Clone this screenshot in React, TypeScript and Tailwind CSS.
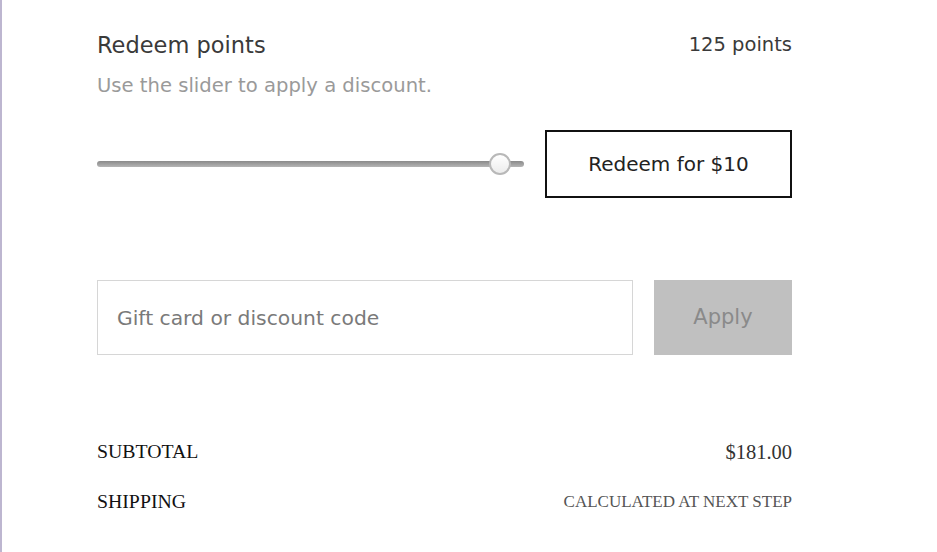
const App = () => {
  return (
    <div className="h-[552px] w-[937px] bg-white border-l-2 border-[#bdb6d0]">
      <div className="w-[695px] ml-[95px] pt-[31px] font-['DejaVu_Sans',sans-serif]">
        <div className="flex items-center justify-between">
          <h2 className="text-[22.5px] leading-[28px] text-[#3a3a3a]">Redeem points</h2>
          <span className="text-[19.5px] leading-[28px] text-[#3a3a3a]">125 points</span>
        </div>
        <p className="mt-[15px] text-[19.6px] leading-[24px] text-[#9a9a9a]">
          Use the slider to apply a discount.
        </p>

        <div className="mt-[32px] flex items-center gap-[21px]">
          <div className="relative h-[24px] w-[427px]">
            <div className="absolute left-0 right-0 top-[9px] h-[6px] rounded-full bg-gradient-to-b from-[#8a8a8a] to-[#b5b5b5]" />
            <div className="absolute left-[392px] top-[1px] h-[22px] w-[22px] rounded-full border-2 border-[#b8b8b8] bg-gradient-to-b from-white to-[#ececec]" />
          </div>
          <button className="h-[68px] w-[247px] border-2 border-[#111] bg-white text-[20px] text-[#222]">
            Redeem for $10
          </button>
        </div>

        <div className="mt-[82px] flex gap-[21px]">
          <input
            className="h-[75px] w-[536px] border border-[#d6d6d6] px-[19px] text-[20.3px] text-[#333] placeholder:text-[#7a7a7a] outline-none"
            placeholder="Gift card or discount code"
          />
          <button className="h-[75px] w-[138px] bg-[#c0c0c0] text-[21px] text-[#8a8a8a]">
            Apply
          </button>
        </div>

        <div className="mt-[85px] font-['Liberation_Serif',serif]">
          <div className="flex h-[24px] items-center justify-between">
            <span className="text-[19.8px] text-[#111]">SUBTOTAL</span>
            <span className="text-[20.5px] text-[#333]">$181.00</span>
          </div>
          <div className="mt-[26px] flex h-[24px] items-center justify-between">
            <span className="text-[19.8px] text-[#111]">SHIPPING</span>
            <span className="text-[17px] text-[#555]">CALCULATED AT NEXT STEP</span>
          </div>
        </div>
      </div>
    </div>
  );
};

export default App;
